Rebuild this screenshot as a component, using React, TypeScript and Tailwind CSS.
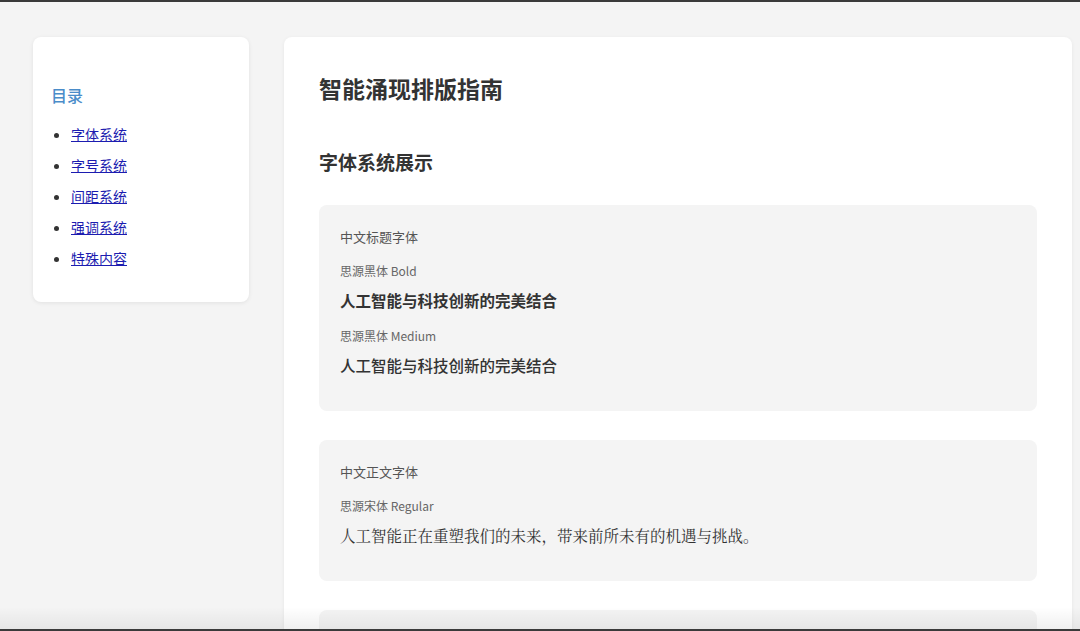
import React from "react";

const sans = '"Noto Sans CJK SC", "Noto Sans", sans-serif';
const serif = '"Noto Serif CJK SC", "Noto Sans CJK SC", serif';

const toc = ["字体系统", "字号系统", "间距系统", "强调系统", "特殊内容"];

function FontBox({
  label,
  items,
}: {
  label: string;
  items: { name: string; text: string; cls: string; family?: string }[];
}) {
  return (
    <div className="bg-[#f4f4f4] rounded-lg px-[21px] pt-[20px] pb-[20px] mb-[29px]">
      <div className="text-[13px] leading-[24px] text-[#555] mb-[12px]">{label}</div>
      {items.map((it, i) => (
        <div key={i} className="mb-[14px]">
          <div className="text-[12px] leading-[20px] text-[#666] mb-[7px]">{it.name}</div>
          <div className={it.cls} style={it.family ? { fontFamily: it.family } : undefined}>
            {it.text}
          </div>
        </div>
      ))}
    </div>
  );
}

export default function App() {
  return (
    <div
      className="relative h-[631px] overflow-hidden bg-[#f4f4f4] border-t-2 border-b-2 border-[#3a3a3a]"
      style={{ fontFamily: sans }}
    >
      <div className="flex items-start gap-[35px] pl-[33px] pr-[8px] pt-[35px]">
        <aside className="w-[216px] shrink-0 bg-white rounded-lg shadow-[0_1px_4px_rgba(0,0,0,0.08)] pl-[18px] pr-[18px] pt-[46px] pb-[28px]">
          <h3 className="text-[16px] leading-[24px] font-medium text-[#4a8cc9] mb-[12px]">目录</h3>
          <ul className="list-disc pl-[20px] text-[#333]">
            {toc.map((t) => (
              <li key={t} className="text-[14px] leading-[31px] marker:text-[#333]">
                <a href="#" className="text-[#1c1cb0] underline">
                  {t}
                </a>
              </li>
            ))}
          </ul>
        </aside>
        <main className="flex-1 bg-white rounded-lg shadow-[0_1px_4px_rgba(0,0,0,0.06)] px-[35px] pt-[35px] pb-[40px]">
          <h1 className="text-[23px] leading-[32px] font-bold text-[#333] mb-[44px]">智能涌现排版指南</h1>
          <h2 className="text-[19px] leading-[28px] font-bold text-[#333] mb-[29px]">字体系统展示</h2>
          <FontBox
            label="中文标题字体"
            items={[
              {
                name: "思源黑体 Bold",
                text: "人工智能与科技创新的完美结合",
                cls: "text-[15.5px] leading-[24px] font-bold text-[#333]",
              },
              {
                name: "思源黑体 Medium",
                text: "人工智能与科技创新的完美结合",
                cls: "text-[15.5px] leading-[24px] font-medium text-[#333]",
              },
            ]}
          />
          <FontBox
            label="中文正文字体"
            items={[
              {
                name: "思源宋体 Regular",
                text: "人工智能正在重塑我们的未来，带来前所未有的机遇与挑战。",
                cls: "text-[15.5px] leading-[24px] font-normal text-[#333]",
                family: serif,
              },
            ]}
          />
          <div className="bg-[#f4f4f4] rounded-lg h-[140px]" />
        </main>
      </div>
      <div className="pointer-events-none absolute inset-x-0 bottom-0 h-[22px] bg-gradient-to-b from-transparent to-black/[0.06]" />
    </div>
  );
}
